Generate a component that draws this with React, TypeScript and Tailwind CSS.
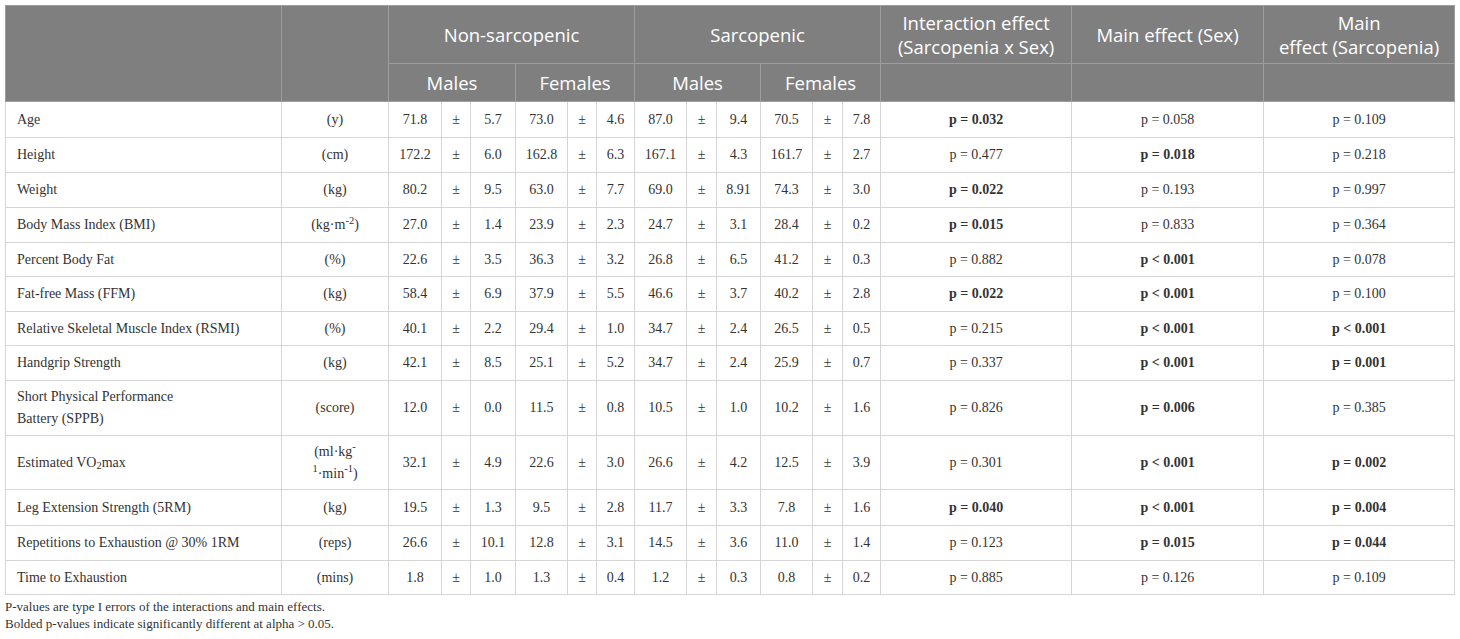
import React from 'react';

type Row = {
  label: React.ReactNode;
  unit: React.ReactNode;
  vals: string[];
  p: [string, boolean][];
  h: string;
};

const rows: Row[] = [
  { label: 'Age', unit: '(y)', vals: ['71.8', '5.7', '73.0', '4.6', '87.0', '9.4', '70.5', '7.8'], p: [['p = 0.032', true], ['p = 0.058', false], ['p = 0.109', false]], h: 'h-[36px]' },
  { label: 'Height', unit: '(cm)', vals: ['172.2', '6.0', '162.8', '6.3', '167.1', '4.3', '161.7', '2.7'], p: [['p = 0.477', false], ['p = 0.018', true], ['p = 0.218', false]], h: 'h-[35px]' },
  { label: 'Weight', unit: '(kg)', vals: ['80.2', '9.5', '63.0', '7.7', '69.0', '8.91', '74.3', '3.0'], p: [['p = 0.022', true], ['p = 0.193', false], ['p = 0.997', false]], h: 'h-[35px]' },
  { label: 'Body Mass Index (BMI)', unit: <>(kg·m<sup>-2</sup>)</>, vals: ['27.0', '1.4', '23.9', '2.3', '24.7', '3.1', '28.4', '0.2'], p: [['p = 0.015', true], ['p = 0.833', false], ['p = 0.364', false]], h: 'h-[35px]' },
  { label: 'Percent Body Fat', unit: '(%)', vals: ['22.6', '3.5', '36.3', '3.2', '26.8', '6.5', '41.2', '0.3'], p: [['p = 0.882', false], ['p < 0.001', true], ['p = 0.078', false]], h: 'h-[34px]' },
  { label: 'Fat-free Mass (FFM)', unit: '(kg)', vals: ['58.4', '6.9', '37.9', '5.5', '46.6', '3.7', '40.2', '2.8'], p: [['p = 0.022', true], ['p < 0.001', true], ['p = 0.100', false]], h: 'h-[35px]' },
  { label: 'Relative Skeletal Muscle Index (RSMI)', unit: '(%)', vals: ['40.1', '2.2', '29.4', '1.0', '34.7', '2.4', '26.5', '0.5'], p: [['p = 0.215', false], ['p < 0.001', true], ['p < 0.001', true]], h: 'h-[34px]' },
  { label: 'Handgrip Strength', unit: '(kg)', vals: ['42.1', '8.5', '25.1', '5.2', '34.7', '2.4', '25.9', '0.7'], p: [['p = 0.337', false], ['p < 0.001', true], ['p = 0.001', true]], h: 'h-[35px]' },
  { label: <>Short Physical Performance<br />Battery (SPPB)</>, unit: '(score)', vals: ['12.0', '0.0', '11.5', '0.8', '10.5', '1.0', '10.2', '1.6'], p: [['p = 0.826', false], ['p = 0.006', true], ['p = 0.385', false]], h: 'h-[55px]' },
  { label: <>Estimated VO<sub>2</sub>max</>, unit: <>(ml·kg<sup>-</sup><br /><sup>1</sup>·min<sup>-1</sup>)</>, vals: ['32.1', '4.9', '22.6', '3.0', '26.6', '4.2', '12.5', '3.9'], p: [['p = 0.301', false], ['p < 0.001', true], ['p = 0.002', true]], h: 'h-[54px]' },
  { label: 'Leg Extension Strength (5RM)', unit: '(kg)', vals: ['19.5', '1.3', '9.5', '2.8', '11.7', '3.3', '7.8', '1.6'], p: [['p = 0.040', true], ['p < 0.001', true], ['p = 0.004', true]], h: 'h-[36px]' },
  { label: 'Repetitions to Exhaustion @ 30% 1RM', unit: '(reps)', vals: ['26.6', '10.1', '12.8', '3.1', '14.5', '3.6', '11.0', '1.4'], p: [['p = 0.123', false], ['p = 0.015', true], ['p = 0.044', true]], h: 'h-[35px]' },
  { label: 'Time to Exhaustion', unit: '(mins)', vals: ['1.8', '1.0', '1.3', '0.4', '1.2', '0.3', '0.8', '0.2'], p: [['p = 0.885', false], ['p = 0.126', false], ['p = 0.109', false]], h: 'h-[34px]' },
];

const widths = [276, 107, 53, 29, 45, 52, 29, 38, 52, 30, 44, 52, 30, 38, 191, 192, 191];

const th = 'border border-[#9d9d9d] bg-[#7f7f7f] text-white font-normal text-center align-middle px-1';
const td = 'border border-[#d5d5d5] text-center align-middle px-0';

export default function App() {
  return (
    <div className="bg-white w-[1460px] h-[639px] pt-[5px] pl-[5px] text-[#333]" style={{ fontFamily: '"Liberation Serif", serif' }}>
      <table className="table-fixed border-collapse w-[1449px] text-[14px] leading-[22px]">
        <colgroup>
          {widths.map((w, i) => (
            <col key={i} style={{ width: w }} />
          ))}
        </colgroup>
        <thead style={{ fontFamily: '"Open Sans", sans-serif' }} className="text-[18.5px] leading-[24px]">
          <tr className="h-[58px]">
            <th rowSpan={2} className={th}></th>
            <th rowSpan={2} className={th}></th>
            <th colSpan={6} className={th}>Non-sarcopenic</th>
            <th colSpan={6} className={th}>Sarcopenic</th>
            <th className={th}>Interaction effect<br />(Sarcopenia x Sex)</th>
            <th className={th}>Main effect (Sex)</th>
            <th className={th}>Main<br />effect (Sarcopenia)</th>
          </tr>
          <tr className="h-[38px]">
            <th colSpan={3} className={th}>Males</th>
            <th colSpan={3} className={th}>Females</th>
            <th colSpan={3} className={th}>Males</th>
            <th colSpan={3} className={th}>Females</th>
            <th className={th}></th>
            <th className={th}></th>
            <th className={th}></th>
          </tr>
        </thead>
        <tbody>
          {rows.map((r, i) => (
            <tr key={i} className={r.h}>
              <td className="border border-[#d5d5d5] text-left align-middle pl-[11px] pr-2">{r.label}</td>
              <td className={td}>{r.unit}</td>
              {[0, 1, 2, 3].map((g) => (
                <React.Fragment key={g}>
                  <td className={td}>{r.vals[g * 2]}</td>
                  <td className={td}>±</td>
                  <td className={td}>{r.vals[g * 2 + 1]}</td>
                </React.Fragment>
              ))}
              {r.p.map(([t, b], j) => (
                <td key={j} className={`${td} ${b ? 'font-bold' : ''}`}>{t}</td>
              ))}
            </tr>
          ))}
        </tbody>
      </table>
      <div className="mt-[3px] text-[13px] leading-[17px]">
        <p>P-values are type I errors of the interactions and main effects.</p>
        <p>Bolded p-values indicate significantly different at alpha &gt; 0.05.</p>
      </div>
    </div>
  );
}
